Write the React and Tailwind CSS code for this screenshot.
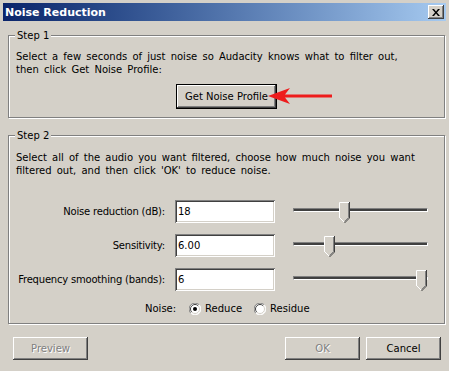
import { useState } from "react"

const raised =
  "shadow-[inset_-1px_-1px_0_#404040,inset_1px_1px_0_#ffffff,inset_-2px_-2px_0_#808080,inset_2px_2px_0_#d4d0c8]"
const sunken =
  "shadow-[inset_1px_1px_0_#808080,inset_-1px_-1px_0_#ffffff,inset_2px_2px_0_#404040,inset_-2px_-2px_0_#d4d0c8]"
const etched =
  "border border-[#808080] shadow-[inset_1px_1px_0_#ffffff,1px_1px_0_#ffffff]"

function Button({ children, disabled, isDefault, className = "" }) {
  return (
    <button
      className={`flex h-[23px] w-[75px] items-center justify-center bg-[#d4d0c8] ${raised} ${
        isDefault ? "outline outline-1 outline-black" : ""
      } ${disabled ? "text-[#808080] [text-shadow:1px_1px_0_#ffffff]" : "text-black"} ${className}`}
    >
      {children}
    </button>
  )
}

function Group({ title, className = "", children }) {
  return (
    <div className={`relative ml-[5px] w-[437px] ${etched} ${className}`}>
      <span className="absolute -top-[7px] left-[6px] bg-[#d4d0c8] px-[2px] leading-[13px]">
        {title}
      </span>
      {children}
    </div>
  )
}

function Thumb() {
  return (
    <svg width="11" height="21" viewBox="0 0 11 21">
      <polygon points="0,0 11,0 11,16 5.5,21 0,16" fill="#d4d0c8" />
      <polyline points="0.5,16 0.5,0.5 10,0.5" fill="none" stroke="#ffffff" />
      <polyline points="0.5,15.5 5,20" fill="none" stroke="#ffffff" />
      <polyline points="10.5,0 10.5,16 5.5,21" fill="none" stroke="#404040" />
      <polyline points="9.5,1 9.5,15.5 5.5,19.5" fill="none" stroke="#808080" />
    </svg>
  )
}

function Slider({ value }) {
  return (
    <div className="relative h-[23px] w-[135px]">
      <div className="absolute left-0 right-0 top-[8px] h-[4px] border border-b-white border-l-[#808080] border-r-white border-t-[#808080] bg-[#404040]" />
      <div className="absolute top-[2px]" style={{ left: Math.round(value * 123) }}>
        <Thumb />
      </div>
    </div>
  )
}

function Radio({ checked }) {
  return (
    <svg width="12" height="12" viewBox="0 0 12 12">
      <circle cx="6" cy="6" r="5.5" fill="#ffffff" />
      <path d="M10.2 1.8 A5.5 5.5 0 0 0 1.8 10.2" fill="none" stroke="#808080" />
      <path d="M9.2 2.8 A4.5 4.5 0 0 0 2.8 9.2" fill="none" stroke="#404040" />
      <path d="M1.8 10.2 A5.5 5.5 0 0 0 10.2 1.8" fill="none" stroke="#ffffff" />
      <path d="M2.8 9.2 A4.5 4.5 0 0 0 9.2 2.8" fill="none" stroke="#d4d0c8" />
      {checked && <circle cx="6" cy="6" r="2" fill="#000000" />}
    </svg>
  )
}

const rows = [
  { label: "Noise reduction (dB):", value: "18", pos: 46 / 123 },
  { label: "Sensitivity:", value: "6.00", pos: 31 / 123 },
  { label: "Frequency smoothing (bands):", value: "6", pos: 1 },
]

export default function App() {
  const [mode, setMode] = useState("reduce")

  return (
    <div className="h-[371px] w-[449px] overflow-hidden bg-[#d4d0c8] px-[3px] pt-[3px] font-['DejaVu_Sans',sans-serif] text-[10px] leading-[13px] text-black">
      {/* title bar */}
      <div className="flex h-[18px] items-center justify-between bg-gradient-to-r from-[#0a246a] to-[#a6caf0] pl-[2px] pr-[2px]">
        <span className="text-[11px] font-bold text-white">Noise Reduction</span>
        <button className={`flex h-[14px] w-[16px] items-center justify-center bg-[#d4d0c8] ${raised}`}>
          <svg width="8" height="7" viewBox="0 0 8 7">
            <path d="M0 0h2l2 2.5L6 0h2L5 3.5 8 7H6L4 4.5 2 7H0l3-3.5z" fill="#000" />
          </svg>
        </button>
      </div>

      {/* Step 1 */}
      <Group title="Step 1" className="mt-[14px] h-[83px]">
        <div className="pl-[7px] pt-[14px] [word-spacing:2px]">
          <p>Select a few seconds of just noise so Audacity knows what to filter out,</p>
          <p>then click Get Noise Profile:</p>
        </div>
        <div className="relative mt-[9px] flex justify-center">
          <Button isDefault className="w-[99px]">Get Noise Profile</Button>
          <svg className="absolute left-[259px] top-[2px]" width="64" height="18" viewBox="0 0 64 18">
            <polygon points="0,9 22,1 17,7.5 64,7.5 64,10.5 17,10.5 22,17" fill="#ee1c1c" />
          </svg>
        </div>
      </Group>

      {/* Step 2 */}
      <Group title="Step 2" className="mt-[17px] h-[189px]">
        <div className="pl-[7px] pt-[15px] [word-spacing:2px]">
          <p>Select all of the audio you want filtered, choose how much noise you want</p>
          <p>filtered out, and then click 'OK' to reduce noise.</p>
        </div>
        <div className="mt-[23px] flex flex-col gap-[11px] pl-[7px]">
          {rows.map((row) => (
            <div key={row.label} className="flex items-center">
              <span className="flex w-[149px] justify-end whitespace-nowrap tracking-[-0.2px]">{row.label}</span>
              <div className={`ml-[10px] flex h-[23px] w-[100px] items-center bg-white pl-[3px] ${sunken}`}>
                {row.value}
              </div>
              <div className="ml-[18px]">
                <Slider value={row.pos} />
              </div>
            </div>
          ))}
        </div>
        <div className="mt-[10px] flex h-[15px] items-center pl-[136px]">
          <span>Noise:</span>
          <label className="ml-[13px] flex items-center gap-[4px]" onClick={() => setMode("reduce")}>
            <Radio checked={mode === "reduce"} />
            <span>Reduce</span>
          </label>
          <label className="ml-[12px] flex items-center gap-[4px]" onClick={() => setMode("residue")}>
            <Radio checked={mode === "residue"} />
            <span>Residue</span>
          </label>
        </div>
      </Group>

      {/* buttons */}
      <div className="ml-[5px] mt-[13px] flex w-[437px] pl-[5px] pr-[4px]">
        <Button disabled>Preview</Button>
        <Button disabled className="ml-auto">OK</Button>
        <Button className="ml-[6px]">Cancel</Button>
      </div>
    </div>
  )
}
